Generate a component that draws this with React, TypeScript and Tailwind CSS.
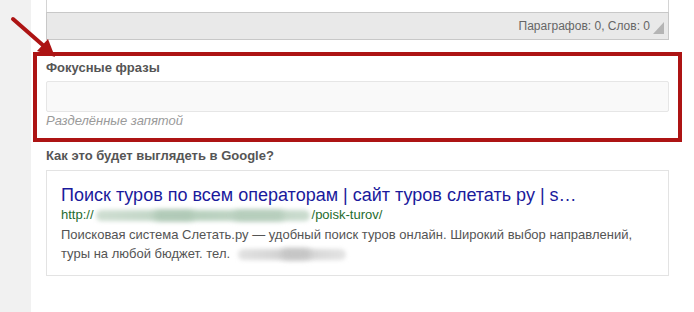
import React from "react";

export default function App() {
  const font = { fontFamily: '"Liberation Sans", Arial, sans-serif' };
  return (
    <div className="relative flex h-[312px] w-[694px] overflow-hidden bg-white" style={font}>
      <div className="w-[31px] shrink-0 bg-[#f1f1f1]" />
      <div className="flex-1 pl-[15px] pr-[25px]">
        {/* editor bottom */}
        <div className="h-[12px] border-x border-[#d4d4d4] bg-white" />
        <div className="flex h-[28px] items-center justify-end border border-[#c8c8c8] bg-[#e9e9e9] pr-[18px] relative">
          <span className="text-[12px] text-[#666]">Параграфов: 0, Слов: 0</span>
          <svg className="absolute right-[4px] bottom-[5px]" width="11" height="12" viewBox="0 0 11 12">
            <polygon points="11,0 11,12 0,12" fill="#b4b4b4" />
          </svg>
        </div>

        {/* highlighted field */}
        <div className="mt-[12px] -mx-[13px] border-4 border-[#ad1414] px-[9px] pt-[3px] pb-[8px]">
          <div className="text-[13px] font-bold leading-[18px] text-[#555]">Фокусные фразы</div>
          <div className="mt-[4px] h-[31px] rounded-[2px] border border-[#e6e6e6] bg-[#f9f9f9]" />
          <div className="text-[13px] italic leading-[18px] text-[#9a9a9a]">Разделённые запятой</div>
        </div>

        <div className="mt-[5px] text-[13px] font-bold leading-[18px] text-[#555]">
          Как это будет выглядеть в Google?
        </div>
        <div className="mt-[5px] border border-[#e3e3e3] bg-white px-[14px] pt-[13px] pb-[12px]">
          <div className="text-[18px] leading-[22px] text-[#1a1a9c] whitespace-nowrap">
            Поиск туров по всем операторам | сайт туров слетать ру | s…
          </div>
          <div className="flex items-center text-[13px] leading-[18px] text-[#1e6b2e] whitespace-nowrap">
            <span>http://</span>
            <span className="relative inline-block h-[14px] w-[218px]">
              <span className="absolute inset-x-[2px] top-[2px] h-[11px] rounded-full bg-gradient-to-r from-[#cfded2] via-[#b9d1bf] to-[#cbdccf] blur-[2px]" />
              <span className="absolute left-[60px] top-[3px] h-[9px] w-[40px] rounded-full bg-[#aec8b5] blur-[3px]" />
              <span className="absolute left-[140px] top-[3px] h-[9px] w-[50px] rounded-full bg-[#b4ccba] blur-[3px]" />
            </span>
            <span>/poisk-turov/</span>
          </div>
          <div className="mt-[2px] text-[13px] leading-[18.6px] text-[#545454]">
            <div className="whitespace-nowrap">
              Поисковая система Слетать.ру — удобный поиск туров онлайн. Широкий выбор направлений,
            </div>
            <div className="flex items-center whitespace-nowrap">
              <span>туры на любой бюджет. тел.</span>
              <span className="relative ml-[6px] inline-block h-[14px] w-[112px]">
                <span className="absolute inset-x-[2px] top-[2px] h-[11px] rounded-full bg-gradient-to-r from-[#e2e2e2] via-[#d0d0d0] to-[#e4e4e4] blur-[2px]" />
                <span className="absolute left-[45px] top-[2px] h-[10px] w-[30px] rounded-full bg-[#c4c4c4] blur-[3px]" />
              </span>
            </div>
          </div>
        </div>
      </div>

      {/* annotation arrow */}
      <svg className="pointer-events-none absolute left-0 top-0" width="70" height="70" viewBox="0 0 70 70">
        <line x1="13" y1="19" x2="45" y2="47" stroke="#ad1414" strokeWidth="4" strokeLinecap="round" />
        <polygon points="55,57 37,51 48,39" fill="#ad1414" />
      </svg>
    </div>
  );
}
